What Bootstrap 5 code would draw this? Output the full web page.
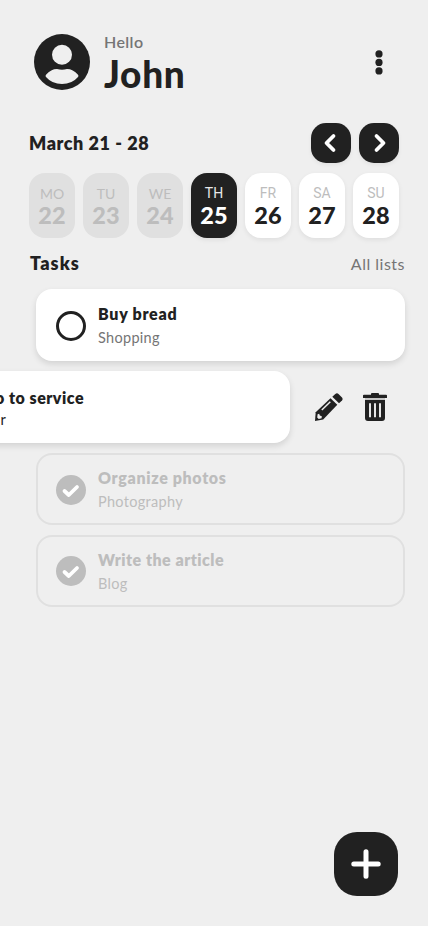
<!DOCTYPE html>
<html lang="en">
<head>
<meta charset="utf-8">
<meta name="viewport" content="width=device-width, initial-scale=1">
<title>Tasks</title>
<link href="https://cdn.jsdelivr.net/npm/bootstrap@5.3.0/dist/css/bootstrap.min.css" rel="stylesheet">
<style>
:root{--ink:#212121;--paper:#efefef;--dim:#bdbdbd;--line:#e0e0e0;--soft:#757575}
body{background:var(--paper);color:var(--ink);font-family:Lato,"Open Sans",sans-serif;overflow:hidden}
.screen{width:428px;height:926px;padding:34px 23px 30px 29px}
.screen svg{display:block;flex:none}
.profile{height:56px;padding:0 16px 0 5px}
.greeting{margin-left:14px;padding-top:4px}
.hello{font-size:16px;line-height:19px;font-weight:600;color:var(--soft);letter-spacing:.4px}
.name{font-size:37px;line-height:46px;font-weight:900;letter-spacing:.7px}
.week{height:40px;margin-top:33px;padding-right:6px}
.head{font-size:18px;font-weight:800;line-height:24px;letter-spacing:.55px}
.dark-btn{background:var(--ink);border:0;padding:0;color:#fff}
.arrow{width:40px;height:40px;border-radius:15px;box-shadow:0 2px 4px rgba(0,0,0,.06)}
.days{margin-top:10px;padding-right:6px}
.day{width:46px;height:65px;border-radius:16px;background:#fff;box-shadow:0 2px 5px rgba(0,0,0,.07);padding-top:12px}
.day .dow{font:400 14px/17px Roboto,sans-serif;color:var(--dim)}
.day .num{font-size:23.5px;line-height:27px;font-weight:900;letter-spacing:.1px}
.day.past{background:var(--line);color:var(--dim);box-shadow:none}
.day.past .dow{font:400 14px/17px Lato,sans-serif}
.day.today{background:var(--ink);color:#fff}
.day.today .dow{color:#e8e8e8}
.list-head{height:24px;margin-top:13px;padding-left:1px}
.list-head .head{letter-spacing:1.1px}
.all{font-size:16px;color:var(--soft);letter-spacing:.5px;padding-top:1px}
.tasks{gap:10px;margin-top:14px;padding-left:7px}
.info{margin-left:12px}
.tools{gap:20px;margin-left:25px}
.task{width:369px;height:72px;border-radius:16px;padding:2px 20px 0;background:#fff;box-shadow:0 3px 6px rgba(0,0,0,.12)}
.task .title{font-size:16px;line-height:24px;font-weight:800;letter-spacing:.72px}
.task .cat{font-size:14.5px;line-height:24px;color:var(--soft);letter-spacing:.3px}
.task.swiped{margin-left:-115px}
.task.swiped .title{letter-spacing:.5px}
.task.swiped .cat{line-height:20px;color:var(--ink)}
.task.done{background:none;border:2px solid var(--line);box-shadow:none;padding:1px 18px 0;color:var(--dim)}
.task.done .title{letter-spacing:.65px}
.task.done:last-child .title{letter-spacing:.48px}
.task.done .cat{color:var(--dim)}
.task.done .info{padding-top:1px}
.task.done:last-child{padding-top:0}
.task.done:last-child .info{padding-top:2px}
.fab{width:64px;height:64px;border-radius:23px;margin-right:7px}
</style>
</head>
<body>
<main class="screen d-flex flex-column">
  <header class="profile d-flex align-items-center">
    <svg width="56" height="56" viewBox="0 0 56 56"><circle cx="28" cy="28" r="28" fill="#212121"/><circle cx="28" cy="20.700" r="10" fill="#efefef"/><path d="M12 40.800Q17 35 23 35Q28 36.300 33 35Q39 35 44 40.800Q45 42 44 43Q38 50 28 50T12 43Q11 42 12 40.800Z" fill="#efefef"/></svg>
    <div class="greeting d-flex flex-column text-nowrap">
      <span class="hello">Hello</span><span class="name">John</span>
    </div>
    <svg class="ms-auto" width="20" height="28" viewBox="0 0 20 28" fill="#212121"><circle cx="10" cy="5.900" r="3.600"/><circle cx="10" cy="14.400" r="3.600"/><circle cx="10" cy="22.900" r="3.600"/></svg>
  </header>

  <section class="week d-flex align-items-center gap-2">
    <h1 class="head mb-0 me-auto">March 21 - 28</h1>
    <button class="dark-btn arrow d-flex align-items-center justify-content-center" aria-label="Previous week"><svg width="20" height="20" viewBox="0 0 20 20" fill="none" stroke="#fff" stroke-width="3.800" stroke-linecap="round" stroke-linejoin="round"><path d="M12.500 3L5.500 10L12.500 17"/></svg></button>
    <button class="dark-btn arrow d-flex align-items-center justify-content-center" aria-label="Next week"><svg width="20" height="20" viewBox="0 0 20 20" fill="none" stroke="#fff" stroke-width="3.800" stroke-linecap="round" stroke-linejoin="round"><path d="M7.500 3L14.500 10L7.500 17"/></svg></button>
  </section>

  <section class="days d-flex gap-2 text-center">
    <div class="day past d-flex flex-column"><span class="dow">MO</span><span class="num">22</span></div>
    <div class="day past d-flex flex-column"><span class="dow">TU</span><span class="num">23</span></div>
    <div class="day past d-flex flex-column"><span class="dow">WE</span><span class="num">24</span></div>
    <div class="day today d-flex flex-column"><span class="dow">TH</span><span class="num">25</span></div>
    <div class="day d-flex flex-column"><span class="dow">FR</span><span class="num">26</span></div>
    <div class="day d-flex flex-column"><span class="dow">SA</span><span class="num">27</span></div>
    <div class="day d-flex flex-column"><span class="dow">SU</span><span class="num">28</span></div>
  </section>

  <div class="list-head d-flex align-items-center justify-content-between">
    <h2 class="head mb-0">Tasks</h2><span class="all">All lists</span>
  </div>

  <section class="tasks d-flex flex-column">
    <div class="task d-flex align-items-center">
      <svg width="30" height="30" viewBox="0 0 30 30"><circle cx="15" cy="15" r="13.500" fill="none" stroke="#212121" stroke-width="3"/></svg>
      <div class="info d-flex flex-column"><span class="title">Buy bread</span><span class="cat">Shopping</span></div>
    </div>
    <div class="d-flex align-items-center">
      <div class="task swiped d-flex align-items-center flex-shrink-0">
        <svg width="30" height="30" viewBox="0 0 30 30"><circle cx="15" cy="15" r="13.500" fill="none" stroke="#212121" stroke-width="3"/></svg>
        <div class="info d-flex flex-column"><span class="title">Go to service</span><span class="cat">Car</span></div>
      </div>
      <div class="tools d-flex">
        <svg width="28" height="28" viewBox="0 0 28 28"><path fill="#212121" d="M0 28L.7 19.300L15.500 5.200L22.300 11.800L8.200 26.500Z"/><path fill="#212121" d="M17.300 3.700L20.300 1Q22 -.3 23.500 1L27 4.600Q28.200 6 27 7.600L24 10.300Z"/><path d="M6.800 17L15.300 8.800" stroke="#efefef" stroke-width="1.500"/><path d="M2.600 21.300L4.200 20.800L4.800 22.600L6.800 23.200L6.600 25.200L3.700 26L2.200 24.500Z" fill="#efefef"/></svg>
        <svg width="24" height="28" viewBox="0 0 24 28"><path fill="#212121" d="M8 1Q8 0 9 0H15Q16 0 16 1V1.700H23Q24 1.700 24 2.500V5H0V2.500Q0 1.700 1 1.700H8ZM2 7H22V25Q22 28 19 28H5Q2 28 2 25Z"/><path fill="#c4c4c4" d="M2 5H22V7H2Z"/><path d="M7 10.300V24.300M12 10.300V24.300M17 10.300V24.300" stroke="#e6e6e6" stroke-width="2"/></svg>
      </div>
    </div>
    <div class="task done d-flex align-items-center">
      <svg width="30" height="30" viewBox="0 0 30 30"><circle cx="15" cy="15" r="15" fill="#bdbdbd"/><path d="M8.500 16L12.800 20L21 12" fill="none" stroke="#fff" stroke-width="3.800" stroke-linecap="round" stroke-linejoin="round"/></svg>
      <div class="info d-flex flex-column"><span class="title">Organize photos</span><span class="cat">Photography</span></div>
    </div>
    <div class="task done d-flex align-items-center">
      <svg width="30" height="30" viewBox="0 0 30 30"><circle cx="15" cy="15" r="15" fill="#bdbdbd"/><path d="M8.500 16L12.800 20L21 12" fill="none" stroke="#fff" stroke-width="3.800" stroke-linecap="round" stroke-linejoin="round"/></svg>
      <div class="info d-flex flex-column"><span class="title">Write the article</span><span class="cat">Blog</span></div>
    </div>
  </section>

  <button class="dark-btn fab mt-auto align-self-end d-flex align-items-center justify-content-center" aria-label="Add task"><svg width="30" height="30" viewBox="0 0 30 30" stroke="#fff" stroke-width="5" stroke-linecap="round"><path d="M15 2.800V27.200M2.800 15H27.200"/></svg></button>
</main>
<script src="https://cdn.jsdelivr.net/npm/bootstrap@5.3.0/dist/js/bootstrap.bundle.min.js"></script>
</body>
</html>
